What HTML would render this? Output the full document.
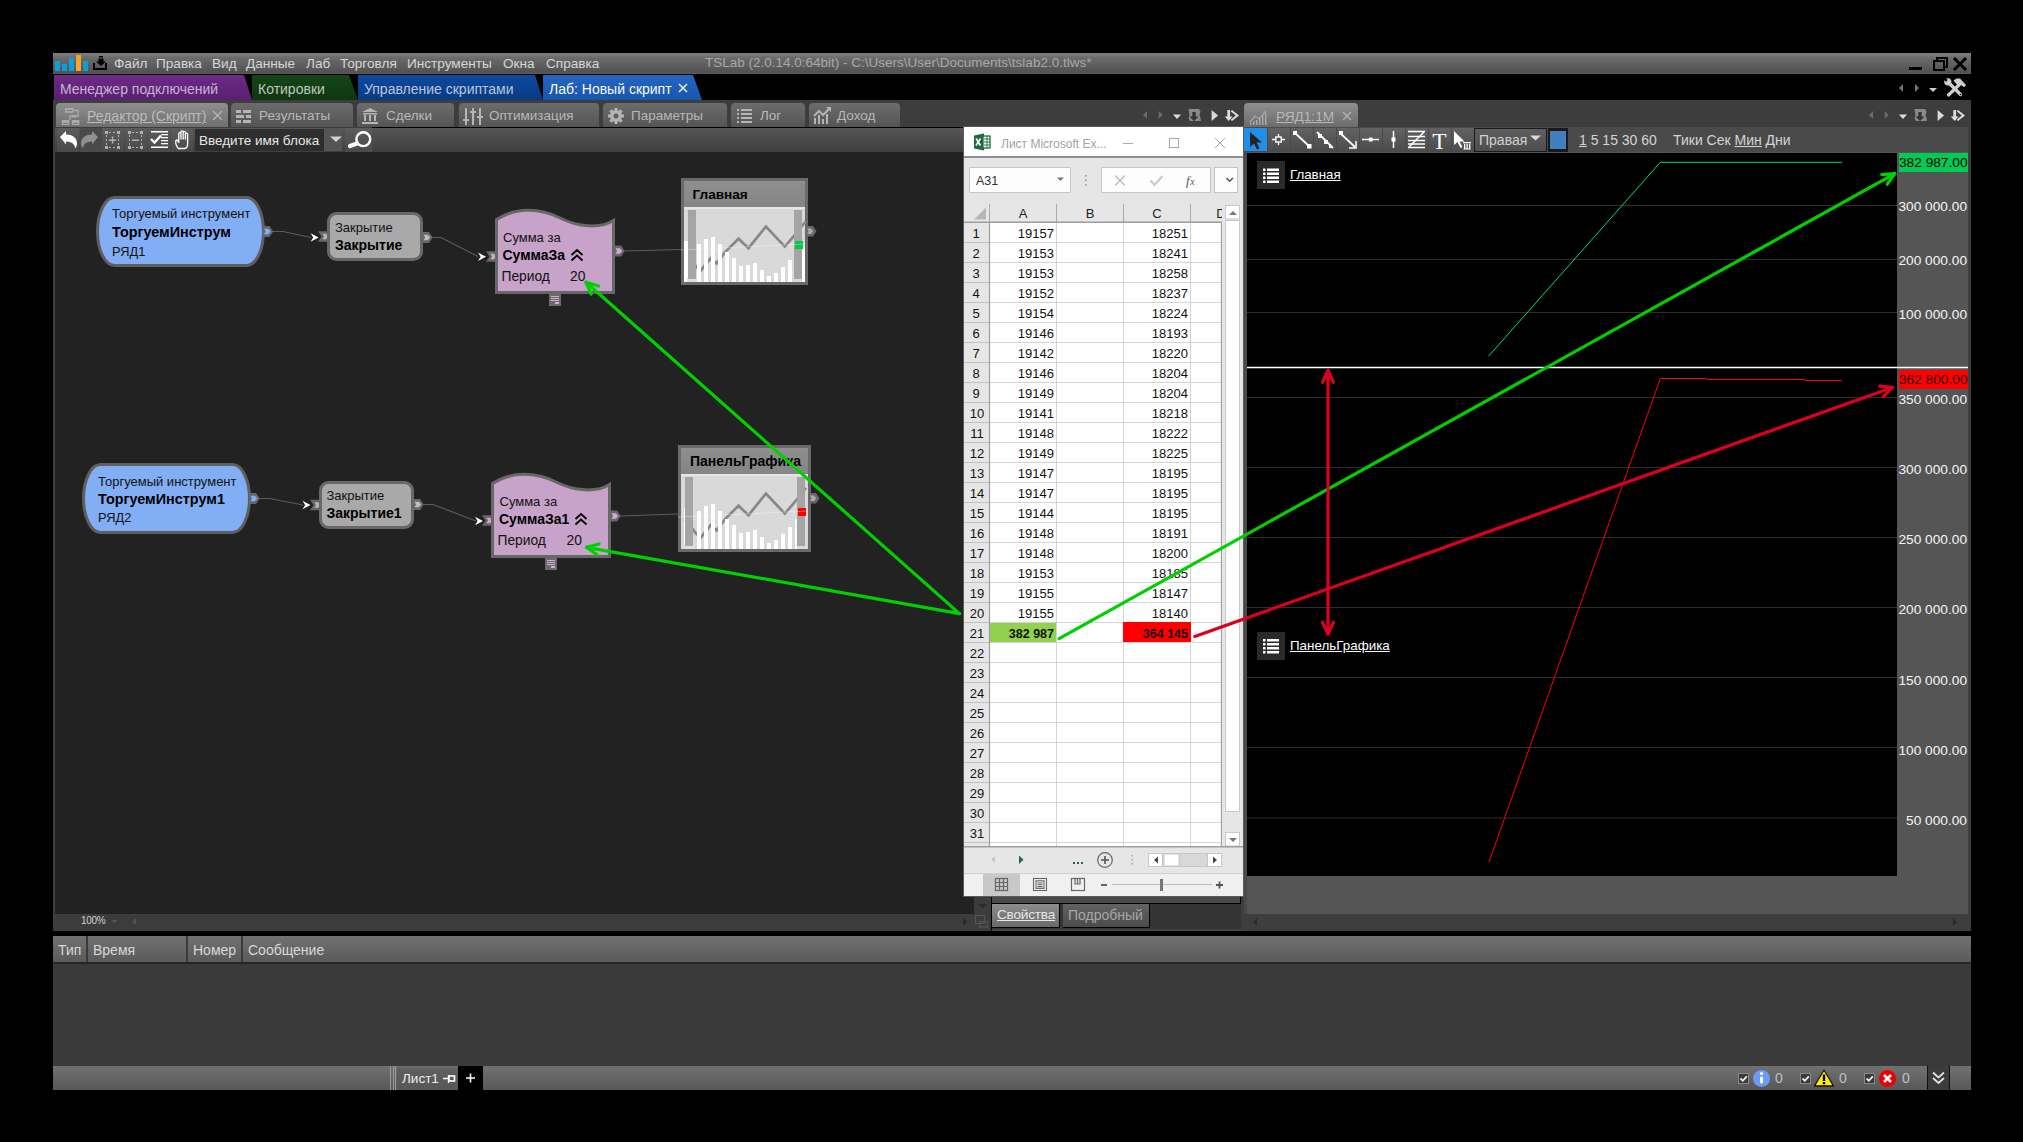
<!DOCTYPE html>
<html><head><meta charset="utf-8">
<style>
*{margin:0;padding:0;box-sizing:border-box}
html,body{width:2023px;height:1142px;overflow:hidden;background:#000;font-family:"Liberation Sans",sans-serif}
.a{position:absolute}
.t{position:absolute;white-space:pre;line-height:1}
#menubar{left:53px;top:53px;width:1918px;height:21px;background:linear-gradient(#7e7e7e,#6a6a6a 25%,#525252 92%,#5c5c5c)}
.menu{font-size:13.6px;color:#d6d6d6}
.doctab{top:75px;height:25px;font-size:14px;color:#cfcfcf}
#edpanel{left:53px;top:100px;width:1191px;height:831px;background:#3d3d3d}
#chpanel{left:1244px;top:100px;width:727px;height:831px;background:#3d3d3d}
.subtab{height:24px;top:103px;border-radius:4px 4px 0 0;background:linear-gradient(#6c6c6c,#545454);font-size:14px;color:#bdbdbd}
.subtab.act{background:linear-gradient(#8e8e8e,#6f6f6f)}
#canvas{left:55px;top:152px;width:919px;height:762px;background:#222}
.st{font-size:14px;color:#b8b8b8}
.tb{position:absolute;top:128px;height:24px;width:22px;background:linear-gradient(#5c5c5c,#4a4a4a)}
#hscroll{left:55px;top:914px;width:919px;height:15px;background:#3c3c3c}
#vscroll{left:974px;top:152px;width:16px;height:777px;background:#3c3c3c}

</style></head>
<body>
<div class="a" id="menubar"></div>
<div class="a" style="left:55px;top:61px;width:5px;height:10px;background:#0ba0dc"></div>
<div class="a" style="left:62px;top:64px;width:5px;height:7px;background:#0ba0dc"></div>
<div class="a" style="left:69px;top:58px;width:5px;height:13px;background:#0ba0dc"></div>
<div class="a" style="left:76px;top:55px;width:5px;height:16px;background:#f5a623"></div>
<div class="a" style="left:83px;top:61px;width:5px;height:10px;background:#0ba0dc"></div>
<svg class="a" style="left:92px;top:55px" width="16" height="16" viewBox="0 0 16 16"><rect x="7" y="1" width="4" height="1.5" fill="#000"/><path d="M6.5 3.5h5v3h2.5l-5 4.5-5-4.5h2.5z" fill="#000"/><path d="M1 8v7h14V8h-2v5H3V8z" fill="#000"/></svg>
<div class="t menu" style="left:114px;top:57px">Файл</div>
<div class="t menu" style="left:156px;top:57px">Правка</div>
<div class="t menu" style="left:212px;top:57px">Вид</div>
<div class="t menu" style="left:246px;top:57px">Данные</div>
<div class="t menu" style="left:306px;top:57px">Лаб</div>
<div class="t menu" style="left:340px;top:57px">Торговля</div>
<div class="t menu" style="left:407px;top:57px">Инструменты</div>
<div class="t menu" style="left:503px;top:57px">Окна</div>
<div class="t menu" style="left:546px;top:57px">Справка</div>
<div class="t" style="left:705px;top:56px;font-size:13.5px;color:#a8a8a8">TSLab (2.0.14.0:64bit) - C:\Users\User\Documents\tslab2.0.tlws*</div>
<svg class="a" style="left:1905px;top:55px" width="66" height="18" viewBox="0 0 66 18">
<rect x="4" y="12" width="13" height="3" fill="#000"/>
<rect x="29" y="6" width="10" height="9" fill="none" stroke="#000" stroke-width="2"/><path d="M32 5V3h10v9h-2" fill="none" stroke="#000" stroke-width="2"/>
<path d="M49 3l12 12M61 3L49 15" stroke="#000" stroke-width="3"/></svg>
<!-- doc tabs -->
<svg class="a" style="left:54px;top:75px" width="660" height="25" viewBox="0 0 660 25">
<defs>
<linearGradient id="gp" x1="0" y1="0" x2="0" y2="1"><stop offset="0" stop-color="#6e2a86"/><stop offset="1" stop-color="#5a1f72"/></linearGradient>
<linearGradient id="gg" x1="0" y1="0" x2="0" y2="1"><stop offset="0" stop-color="#15461a"/><stop offset="1" stop-color="#0f360f"/></linearGradient>
<linearGradient id="gb" x1="0" y1="0" x2="0" y2="1"><stop offset="0" stop-color="#0e4aa0"/><stop offset="1" stop-color="#093a82"/></linearGradient>
<linearGradient id="ga" x1="0" y1="0" x2="0" y2="1"><stop offset="0" stop-color="#2466c0"/><stop offset="1" stop-color="#1856ae"/></linearGradient>
</defs>
<path d="M0 0H190L198 25H0z" fill="url(#gp)"/>
<path d="M198 0H295L304 25H198z" fill="url(#gg)"/>
<path d="M304 0H481L489 25H304z" fill="url(#gb)"/>
<path d="M489 0H639L648 25H489z" fill="url(#ga)"/>
</svg>
<div class="t doctab" style="left:60px;top:81.7px;color:#c4b6cf">Менеджер подключений</div>
<div class="t doctab" style="left:258px;top:81.7px;color:#bfc8ba">Котировки</div>
<div class="t doctab" style="left:364px;top:81.7px;color:#bcc6da">Управление скриптами</div>
<div class="t doctab" style="left:549px;top:81.7px;color:#fafafa">Лаб: Новый скрипт</div>
<svg class="a" style="left:677px;top:82px" width="12" height="12" viewBox="0 0 12 12"><path d="M2 2l8 8M10 2L2 10" stroke="#e8e8e8" stroke-width="1.6"/></svg>
<!-- right nav of doc tabs -->
<svg class="a" style="left:1895px;top:76px" width="76" height="24" viewBox="1895 76 76 24">
<path d="M1903 84v8l-4-4z" fill="#777"/><path d="M1915 84v8l4-4z" fill="#777"/><path d="M1929 88h8l-4 4z" fill="#cfcfcf"/>
<g stroke="#cfcfcf" stroke-linecap="round" fill="none">
<path d="M1949 83l11.5 11.5" stroke-width="3.2"/>
<path d="M1959.5 84.5l-11 10.5" stroke-width="3.2"/>
</g>
<circle cx="1947.8" cy="81.8" r="3.6" fill="#cfcfcf"/>
<path d="M1946.8 80.8l-3-3" stroke="#000" stroke-width="2.4"/>
<path d="M1953.5 80.5l3-2h3.5l6 6.5-1.8 2.2-3.5-2.5-2.5 1.5z" fill="#cfcfcf"/>
<circle cx="1960.5" cy="94.5" r="0.8" fill="#000"/>
</svg>
<div class="a" id="edpanel"></div>
<div class="a" id="chpanel"></div>

<!-- sub tabs -->
<div class="a subtab act" style="left:56px;width:172px"></div>
<div class="a subtab" style="left:231px;width:122px"></div>
<div class="a subtab" style="left:357px;width:97px"></div>
<div class="a subtab" style="left:459px;width:140px"></div>
<div class="a subtab" style="left:603px;width:124px"></div>
<div class="a subtab" style="left:731px;width:74px"></div>
<div class="a subtab" style="left:809px;width:91px"></div>
<div class="t st" style="left:87px;top:109.3px;text-decoration:underline;color:#bcbcbc">Редактор (Скрипт)</div>
<div class="t st" style="left:259px;top:109.3px;font-size:13.5px">Результаты</div>
<div class="t st" style="left:386px;top:109.3px;font-size:13.5px">Сделки</div>
<div class="t st" style="left:489px;top:109.3px;font-size:13.5px">Оптимизация</div>
<div class="t st" style="left:631px;top:109.3px;font-size:13.5px">Параметры</div>
<div class="t st" style="left:760px;top:109.3px;font-size:13.5px">Лог</div>
<div class="t st" style="left:837px;top:109.3px;font-size:13.5px">Доход</div>
<svg class="a" style="left:0;top:0" width="1243" height="152" viewBox="0 0 1243 152">
<g fill="#a9a9a9">
<!-- editor icon -->
<rect x="65" y="108" width="8.5" height="4.8" fill="#aaa"/><rect x="66.5" y="110" width="5.5" height="1" fill="#777"/>
<path d="M73.5 110.5H78.2V116.2H69.8V120" fill="none" stroke="#aaa" stroke-width="1.3"/>
<rect x="71.5" y="115" width="5" height="2.6" fill="#aaa"/>
<rect x="61.8" y="120" width="7.5" height="5" fill="#aaa"/><rect x="63" y="123" width="5" height="1" fill="#777"/>
<rect x="71.8" y="120" width="7.5" height="5" fill="#aaa"/><rect x="73" y="123" width="5" height="1" fill="#777"/>
<!-- close x -->
</g>
<path d="M213 111l9 9M222 111l-9 9" stroke="#b0b0b0" stroke-width="1.5"/>
<!-- results icon -->
<g fill="#b5b5b5"><rect x="236" y="110" width="5" height="3"/><rect x="243" y="110" width="8" height="3"/><rect x="236" y="115" width="8" height="3"/><rect x="246" y="115" width="5" height="3"/><rect x="236" y="120" width="5" height="3"/><rect x="243" y="120" width="8" height="3"/></g>
<!-- deals icon -->
<g fill="#b5b5b5"><path d="M362 112l8-4 8 4z"/><rect x="363" y="113" width="14" height="1.5"/><rect x="364" y="115" width="2" height="6"/><rect x="369" y="115" width="2" height="6"/><rect x="374" y="115" width="2" height="6"/><rect x="362" y="122" width="16" height="2"/></g>
<!-- optimization icon -->
<g fill="#b5b5b5"><rect x="465" y="108" width="2" height="17"/><rect x="472" y="108" width="2" height="17"/><rect x="479" y="108" width="2" height="17"/><rect x="463" y="119" width="6" height="2"/><rect x="470" y="111" width="6" height="2"/><rect x="477" y="116" width="6" height="2"/></g>
<!-- gear -->
<g transform="translate(616,116)"><circle r="6" fill="#b5b5b5"/><circle r="2.5" fill="#5e5e5e"/>
<g fill="#b5b5b5"><rect x="-1.5" y="-8" width="3" height="16"/><rect x="-8" y="-1.5" width="16" height="3"/><rect x="-1.5" y="-8" width="3" height="16" transform="rotate(45)"/><rect x="-1.5" y="-8" width="3" height="16" transform="rotate(-45)"/></g><circle r="2.5" fill="#5e5e5e"/></g>
<!-- log icon -->
<g fill="#b5b5b5"><rect x="737" y="109" width="2" height="2"/><rect x="741" y="109" width="11" height="2"/><rect x="737" y="113" width="2" height="2"/><rect x="741" y="113" width="11" height="2"/><rect x="737" y="117" width="2" height="2"/><rect x="741" y="117" width="11" height="2"/><rect x="737" y="121" width="2" height="2"/><rect x="741" y="121" width="11" height="2"/></g>
<!-- income icon -->
<g fill="#b5b5b5"><rect x="814" y="118" width="2" height="6"/><rect x="818" y="115" width="2" height="9"/><rect x="822" y="119" width="2" height="5"/><rect x="826" y="114" width="2" height="10"/></g>
<path d="M814 116l5-5 4 4 7-7" stroke="#b5b5b5" stroke-width="2" fill="none"/><path d="M826 107h5v5z" fill="#b5b5b5"/>
</svg>
<!-- toolbar -->
<div class="a" style="left:372px;top:127px;width:872px;height:1px;background:#000"></div><div class="a" style="left:55px;top:128px;width:1189px;height:25px;background:linear-gradient(#565656,#3e3e3e)"></div>
<div class="tb" style="left:57px"></div>
<div class="tb" style="left:80px;background:#4a4a4a"></div>
<div class="tb" style="left:102px"></div>
<div class="tb" style="left:125px"></div>
<div class="tb" style="left:148px"></div>
<div class="tb" style="left:171px"></div>
<div class="a" style="left:195px;top:129px;width:129px;height:22px;background:#2e2e2e"></div>
<div class="a" style="left:324px;top:129px;width:18px;height:22px;background:#555"></div>
<div class="a" style="left:345px;top:128px;width:27px;height:24px;background:linear-gradient(#5c5c5c,#4a4a4a)"></div>
<div class="t" style="left:199px;top:133.5px;font-size:13.5px;color:#e8e8e8">Введите имя блока</div>
<svg class="a" style="left:0;top:0" width="380" height="152" viewBox="0 0 380 152">
<!-- undo -->
<path d="M60 137l6-6v3.5c6 0 11 3 11 9 0 2-1 4-2 5 0-4-3-7-9-7v3z" fill="#fff"/>
<!-- redo -->
<path d="M98 137l-6-6v3.5c-6 0-11 3-11 9 0 2 1 4 2 5 0-4 3-7 9-7v3z" fill="#8f8f8f"/>
<g fill="#b0b0b0"><rect x="105" y="131" width="3" height="3"/><rect x="117" y="131" width="3" height="3"/><rect x="105" y="146" width="3" height="3"/><rect x="117" y="146" width="3" height="3"/>
<rect x="109" y="132" width="2" height="1"/><rect x="113" y="132" width="2" height="1"/><rect x="109" y="147" width="2" height="1"/><rect x="113" y="147" width="2" height="1"/>
<rect x="106" y="135" width="1" height="2"/><rect x="106" y="139" width="1" height="2"/><rect x="106" y="143" width="1" height="2"/><rect x="118" y="135" width="1" height="2"/><rect x="118" y="139" width="1" height="2"/><rect x="118" y="143" width="1" height="2"/>
<rect x="109" y="139.5" width="7" height="1.5"/><rect x="111.8" y="136.5" width="1.5" height="7"/></g>
<g fill="#b0b0b0"><rect x="128" y="131" width="3" height="3"/><rect x="140" y="131" width="3" height="3"/><rect x="128" y="146" width="3" height="3"/><rect x="140" y="146" width="3" height="3"/>
<rect x="132" y="132" width="2" height="1"/><rect x="136" y="132" width="2" height="1"/><rect x="132" y="147" width="2" height="1"/><rect x="136" y="147" width="2" height="1"/>
<rect x="129" y="135" width="1" height="2"/><rect x="129" y="139" width="1" height="2"/><rect x="129" y="143" width="1" height="2"/><rect x="141" y="135" width="1" height="2"/><rect x="141" y="139" width="1" height="2"/><rect x="141" y="143" width="1" height="2"/>
<rect x="132" y="139.5" width="7" height="1.5"/></g>
<g fill="#fff"><rect x="151" y="131" width="17" height="1.5"/><rect x="151" y="146.5" width="17" height="1.5"/><rect x="161" y="134" width="7" height="1.3"/><rect x="161" y="137" width="7" height="1.3"/><rect x="161" y="140" width="7" height="1.3"/><rect x="161" y="143" width="7" height="1.3"/></g>
<path d="M151 139l3.5 3.5 6.5-7" stroke="#fff" stroke-width="2.4" fill="none"/>
<!-- hand -->
<path d="M178.5 148.5C176.5 146.5 175.5 143.5 175.8 140.5L177 139.8L178.8 142.5V133.5C178.8 132.3 181 132.3 181 133.5V139V131.8C181 130.6 183.2 130.6 183.2 131.8V139V132.3C183.2 131.1 185.4 131.1 185.4 132.3V139V134C185.4 132.8 187.6 132.8 187.6 134V143.5C187.6 146.5 186.5 148.5 184.5 148.5Z" fill="none" stroke="#fff" stroke-width="1.3" stroke-linejoin="round"/>
<path d="M330 136.5h12l-6 5.5z" fill="#d0d0d0"/>
<circle cx="363.3" cy="139.2" r="6.9" fill="none" stroke="#fff" stroke-width="2.4"/><path d="M357 143.5L350 146" stroke="#fff" stroke-width="4.2" stroke-linecap="round"/>
</svg>
<div class="a" id="canvas"></div>
<div class="a" id="hscroll"></div>
<div class="a" id="vscroll"></div>

<svg class="a" style="left:0;top:0" width="2023" height="1142" viewBox="0 0 2023 1142"><defs><linearGradient id="hdr" x1="0" y1="0" x2="0" y2="1"><stop offset="0" stop-color="#8e8e8e"/><stop offset="1" stop-color="#858585"/></linearGradient><clipPath id="cv"><rect x="55" y="152" width="919" height="762"/></clipPath></defs><g clip-path="url(#cv)" font-family="Liberation Sans">
<rect x="97.5" y="197.5" width="166" height="68" rx="17" ry="34" fill="#82aef5" stroke="#5f5f5f" stroke-width="3"/>
<text x="112" y="218" font-size="13" fill="#111">Торгуемый инструмент</text>
<text x="112" y="236.5" font-size="14.4" font-weight="bold" fill="#000">ТоргуемИнструм</text>
<text x="112" y="255.5" font-size="12.8" fill="#111">РЯД1</text>
<path d="M262.5 226.0h7l3.7 5.5-3.7 5.5h-7z" fill="#686868"/><path d="M264.0 228.7h4.3l2.5 2.8-2.5 2.8h-4.3l1.6-2.8z" fill="#7fb0ff"/>
<path d="M273 231.5H283L311 237.5" fill="none" stroke="#5c5c5c" stroke-width="1.2"/>
<path d="M318.6 237.5l-8-4.3 2.6 4.3-2.6 4.3z" fill="#fff"/>
<path d="M318 231.2h9.5v10.6h-9.5l3.5-5.3z" fill="#686868"/><path d="M322.5 233.7h3.5l2 2.8-2 2.8h-3.5l1.6-2.8z" fill="#b8b8b8"/>
<rect x="328.5" y="213.5" width="93" height="46" rx="8" fill="#a9a9a9" stroke="#686868" stroke-width="3"/>
<text x="335" y="232" font-size="13" fill="#111">Закрытие</text>
<text x="335" y="250" font-size="14" font-weight="bold" fill="#000">Закрытие</text>
<path d="M422 232.0h7l3.7 5.5-3.7 5.5h-7z" fill="#686868"/><path d="M423.5 234.7h4.3l2.5 2.8-2.5 2.8h-4.3l1.6-2.8z" fill="#bdbdbd"/>
<path d="M432 237.5H441L478 256.5" fill="none" stroke="#5c5c5c" stroke-width="1.2"/>
<path d="M486 256.8l-8-4.3 2.6 4.3-2.6 4.3z" fill="#fff"/>
<path d="M486 251.2h9.5v10.6h-9.5l3.5-5.3z" fill="#686868"/><path d="M490.5 253.7h3.5l2 2.8-2 2.8h-3.5l1.6-2.8z" fill="#d0a8d2"/>
<path d="M496.5 219.5C516 207 540 208 560 218C578 227 600 229 613.5 220.5V292.5H496.5Z" fill="#c7a2c9" stroke="#686868" stroke-width="3"/>
<text x="503" y="242" font-size="13" fill="#111">Сумма за</text>
<text x="502.5" y="260" font-size="14" font-weight="bold" fill="#000">СуммаЗа</text>
<path d="M571.5 255l5.5-5 5.5 5M571.5 260.5l5.5-5 5.5 5" fill="none" stroke="#000" stroke-width="1.8"/>
<text x="501.5" y="281" font-size="13.8" fill="#111">Период</text>
<text x="570" y="281" font-size="13.8" fill="#111">20</text>
<path d="M614 245.5h7l3.7 5.5-3.7 5.5h-7z" fill="#686868"/><path d="M615.5 248.2h4.3l2.5 2.8-2.5 2.8h-4.3l1.6-2.8z" fill="#d0a8d2"/>
<rect x="549" y="294" width="12" height="12" fill="#6a6a6a"/><g fill="#d0b0d0"><rect x="551" y="296" width="8" height="1"/><rect x="551" y="298" width="8" height="1"/><rect x="551" y="300" width="8" height="1"/><rect x="555" y="302" width="4" height="2"/></g>
<path d="M624 251L681 249.5" stroke="#5c5c5c" stroke-width="1.2"/>
<rect x="681" y="178" width="127" height="107" fill="#6a6a6a"/>
<rect x="684" y="181" width="121" height="26" fill="url(#hdr)"/>
<rect x="684" y="207" width="121" height="75" fill="#d9d9d9"/>
<rect x="684" y="207" width="121" height="2" fill="#e6e6e6"/>
<polyline points="684,252 688,256 696,266.5 700.7,270.7 710.7,258.1 716.5,263.4 725.4,251.8 738.5,238.7 748.5,248.2 765.9,226.6 784.8,246.6 794,236 806,221" fill="none" stroke="#878787" stroke-width="2.7" stroke-linejoin="miter"/>
<rect x="697" y="244" width="4" height="38" fill="#fff"/>
<rect x="704" y="239" width="4" height="43" fill="#fff"/>
<rect x="711" y="237" width="4" height="45" fill="#fff"/>
<rect x="718" y="244" width="4" height="38" fill="#fff"/>
<rect x="725" y="252" width="4" height="30" fill="#fff"/>
<rect x="732" y="258" width="4" height="24" fill="#fff"/>
<rect x="739" y="266" width="4" height="16" fill="#fff"/>
<rect x="746" y="265" width="4" height="17" fill="#fff"/>
<rect x="753" y="263" width="4" height="19" fill="#fff"/>
<rect x="760" y="270" width="4" height="12" fill="#fff"/>
<rect x="767" y="276" width="4" height="6" fill="#fff"/>
<rect x="774" y="273" width="4" height="9" fill="#fff"/>
<rect x="781" y="267" width="4" height="15" fill="#fff"/>
<rect x="788" y="260" width="4" height="22" fill="#fff"/>
<rect x="684" y="241" width="4" height="41" fill="#fff"/>
<rect x="802" y="246" width="3" height="36" fill="#fff"/>
<rect x="687" y="278" width="10" height="4" fill="#e0e0e0"/>
<rect x="688" y="210" width="8" height="69" fill="#a5a5a5"/>
<rect x="794" y="210" width="8" height="69" fill="#a5a5a5"/>
<rect x="795" y="241" width="8" height="8" fill="#00cc44"/>
<path d="M681 250 L805 244" stroke="#fff" stroke-opacity="0.35" stroke-width="1"/>
<text x="692.5" y="199" font-size="13.6" font-weight="bold" fill="#000">Главная</text>
<path d="M805 226h8l3.5 5.2-3.5 5.2h-8z" fill="#686868"/><path d="M807 228.5h4l2.2 2.7-2.2 2.7h-4l1.6-2.7z" fill="#aaa"/>
<rect x="83.5" y="464.5" width="166" height="68" rx="17" ry="34" fill="#82aef5" stroke="#5f5f5f" stroke-width="3"/>
<text x="98" y="485.5" font-size="13" fill="#111">Торгуемый инструмент</text>
<text x="98" y="503.5" font-size="14.4" font-weight="bold" fill="#000">ТоргуемИнструм1</text>
<text x="98" y="522" font-size="12.8" fill="#111">РЯД2</text>
<path d="M249 493.0h7l3.7 5.5-3.7 5.5h-7z" fill="#686868"/><path d="M250.5 495.7h4.3l2.5 2.8-2.5 2.8h-4.3l1.6-2.8z" fill="#7fb0ff"/>
<path d="M259.5 498.5H269.5L303 505" fill="none" stroke="#5c5c5c" stroke-width="1.2"/>
<path d="M310.5 505l-8-4.3 2.6 4.3-2.6 4.3z" fill="#fff"/>
<path d="M310 499.7h9.5v10.6h-9.5l3.5-5.3z" fill="#686868"/><path d="M314.5 502.2h3.5l2 2.8-2 2.8h-3.5l1.6-2.8z" fill="#b8b8b8"/>
<rect x="320.5" y="482.5" width="92" height="45" rx="8" fill="#a9a9a9" stroke="#686868" stroke-width="3"/>
<text x="326.5" y="500" font-size="13" fill="#111">Закрытие</text>
<text x="326.5" y="518" font-size="14" font-weight="bold" fill="#000">Закрытие1</text>
<path d="M413 499.0h7l3.7 5.5-3.7 5.5h-7z" fill="#686868"/><path d="M414.5 501.7h4.3l2.5 2.8-2.5 2.8h-4.3l1.6-2.8z" fill="#bdbdbd"/>
<path d="M423 504.5H433L476 521" fill="none" stroke="#5c5c5c" stroke-width="1.2"/>
<path d="M483 521l-8-4.3 2.6 4.3-2.6 4.3z" fill="#fff"/>
<path d="M482 515.2h9.5v10.6h-9.5l3.5-5.3z" fill="#686868"/><path d="M486.5 517.7h3.5l2 2.8-2 2.8h-3.5l1.6-2.8z" fill="#d0a8d2"/>
<path d="M492.5 483.5C512 471 536 472 556 482C574 491 596 493 609.5 484.5V556.5H492.5Z" fill="#c7a2c9" stroke="#686868" stroke-width="3"/>
<text x="499.5" y="506" font-size="13" fill="#111">Сумма за</text>
<text x="499" y="524" font-size="14" font-weight="bold" fill="#000">СуммаЗа1</text>
<path d="M575.5 519l5.5-5 5.5 5M575.5 524.5l5.5-5 5.5 5" fill="none" stroke="#000" stroke-width="1.8"/>
<text x="497.5" y="545" font-size="13.8" fill="#111">Период</text>
<text x="566.5" y="545" font-size="13.8" fill="#111">20</text>
<path d="M610 510.5h7l3.7 5.5-3.7 5.5h-7z" fill="#686868"/><path d="M611.5 513.2h4.3l2.5 2.8-2.5 2.8h-4.3l1.6-2.8z" fill="#d0a8d2"/>
<rect x="545" y="558" width="12" height="12" fill="#6a6a6a"/><g fill="#d0b0d0"><rect x="547" y="560" width="8" height="1"/><rect x="547" y="562" width="8" height="1"/><rect x="547" y="564" width="8" height="1"/><rect x="551" y="566" width="4" height="2"/></g>
<path d="M620 516L678 514" stroke="#5c5c5c" stroke-width="1.2"/>
<rect x="678" y="445" width="133" height="107" fill="#6a6a6a"/>
<rect x="681" y="448" width="127" height="26" fill="url(#hdr)"/>
<rect x="681" y="474" width="127" height="75" fill="#d9d9d9"/>
<rect x="681" y="474" width="127" height="2" fill="#e6e6e6"/>
<polyline points="684,519 688,523 696,533.5 700.7,537.7 710.7,525.1 716.5,530.4 725.4,518.8 738.5,505.7 748.5,515.2 765.9,493.6 784.8,513.6 794,503 806,488" fill="none" stroke="#878787" stroke-width="2.7" stroke-linejoin="miter"/>
<rect x="697" y="511" width="4" height="38" fill="#fff"/>
<rect x="704" y="506" width="4" height="43" fill="#fff"/>
<rect x="711" y="504" width="4" height="45" fill="#fff"/>
<rect x="718" y="511" width="4" height="38" fill="#fff"/>
<rect x="725" y="519" width="4" height="30" fill="#fff"/>
<rect x="732" y="525" width="4" height="24" fill="#fff"/>
<rect x="739" y="533" width="4" height="16" fill="#fff"/>
<rect x="746" y="532" width="4" height="17" fill="#fff"/>
<rect x="753" y="530" width="4" height="19" fill="#fff"/>
<rect x="760" y="537" width="4" height="12" fill="#fff"/>
<rect x="767" y="543" width="4" height="6" fill="#fff"/>
<rect x="774" y="540" width="4" height="9" fill="#fff"/>
<rect x="781" y="534" width="4" height="15" fill="#fff"/>
<rect x="788" y="527" width="4" height="22" fill="#fff"/>
<rect x="684" y="508" width="2" height="41" fill="#fff"/>
<rect x="795" y="519" width="2" height="30" fill="#fff"/>
<rect x="684" y="545" width="10" height="4" fill="#e0e0e0"/>
<rect x="685" y="477" width="8" height="69" fill="#a5a5a5"/>
<rect x="797" y="477" width="8" height="69" fill="#a5a5a5"/>
<rect x="798" y="508" width="8" height="8" fill="#ff0000"/>
<path d="M678 517 L808 511" stroke="#fff" stroke-opacity="0.35" stroke-width="1"/>
<text x="690" y="466" font-size="14" font-weight="bold" fill="#000">ПанельГрафика</text>
<path d="M808 493h8l3.5 5.2-3.5 5.2h-8z" fill="#686868"/><path d="M810 495.5h4l2.2 2.7-2.2 2.7h-4l1.6-2.7z" fill="#aaa"/>
</g></svg>
<div class="a" style="left:963px;top:126px;width:281px;height:771px;background:#5a5a5a"></div>
<div class="a" style="left:964px;top:127px;width:279px;height:769px;background:#e6e6e6"></div>
<div class="a" style="left:964px;top:127px;width:279px;height:29px;background:#fff"></div>
<div class="a" style="left:964px;top:156px;width:279px;height:1.5px;background:#8f8f8f"></div>
<div class="t" style="left:1001px;top:137.5px;font-size:12px;color:#a2a2a2">Лист Microsoft Ex...</div>
<div class="a" style="left:969px;top:167px;width:102px;height:26px;background:#fdfdfd;border:1px solid #c6c6c6"></div>
<div class="t" style="left:976px;top:175px;font-size:12.5px;color:#333">A31</div>
<div class="a" style="left:1101px;top:167px;width:110px;height:26px;background:#fdfdfd;border:1px solid #c6c6c6"></div>
<div class="a" style="left:1214px;top:167px;width:24px;height:26px;background:#fdfdfd;border:1px solid #c6c6c6"></div>
<div class="a" style="left:990px;top:222px;width:232px;height:624px;background:#fff"></div>
<svg class="a" style="left:0;top:0" width="2023" height="1142" viewBox="0 0 2023 1142">
<path d="M974 135.5l10-2v17l-10-2z" fill="#1d6b3c"/><rect x="983" y="136" width="7" height="12" fill="#fff" stroke="#1d6b3c" stroke-width="1.3"/><path d="M984 139h6M984 142h6M984 145h6M987 136v12" stroke="#1d6b3c" stroke-width="0.9"/><path d="M976 138.5l4.5 7M980.5 138.5l-4.5 7" stroke="#fff" stroke-width="1.6"/>
<path d="M1123 143.5h10" stroke="#a8a8a8" stroke-width="1"/><rect x="1169.5" y="138.5" width="9" height="9" fill="none" stroke="#a8a8a8" stroke-width="1"/><path d="M1215 138l10 10M1225 138l-10 10" stroke="#a8a8a8" stroke-width="1"/>
<path d="M1057 177.5h7l-3.5 3.5z" fill="#777"/>
<g fill="#9a9a9a"><rect x="1085" y="175" width="1.6" height="1.6"/><rect x="1085" y="179.5" width="1.6" height="1.6"/><rect x="1085" y="184" width="1.6" height="1.6"/></g>
<path d="M1115 175.5l10 10M1125 175.5l-10 10" stroke="#bdbdbd" stroke-width="1.3"/><path d="M1150.5 180.5l4 4.5 8-9" fill="none" stroke="#c8c8c8" stroke-width="2"/>
<text x="1186" y="185" font-family="Liberation Serif" font-style="italic" font-size="13" fill="#555">f<tspan font-size="10" dx="0.5">x</tspan></text>
<path d="M1226.5 178l3.2 3.2 3.2-3.2" fill="none" stroke="#555" stroke-width="1.6"/>
<rect x="964" y="203" width="258" height="19" fill="#e6e6e6"/>
<path d="M974 219.5l12-12v12z" fill="#b7b7b7"/>
<path d="M989.5 204v18" stroke="#ababab" stroke-width="1"/>
<path d="M1056.5 204v18" stroke="#ababab" stroke-width="1"/>
<path d="M1123.5 204v18" stroke="#ababab" stroke-width="1"/>
<path d="M1190.5 204v18" stroke="#ababab" stroke-width="1"/>
<rect x="964" y="221.5" width="258" height="1.5" fill="#9e9e9e"/>
<text x="1023" y="218" font-size="13" fill="#222" text-anchor="middle">A</text>
<text x="1090" y="218" font-size="13" fill="#222" text-anchor="middle">B</text>
<text x="1157" y="218" font-size="13" fill="#222" text-anchor="middle">C</text>
<text x="1221" y="218" font-size="13" fill="#222" text-anchor="middle">D</text>
<rect x="964" y="223" width="25" height="623" fill="#e6e6e6"/>
<path d="M989 242.5H1222" stroke="#d4d4d4" stroke-width="1"/>
<path d="M964 242.5H989" stroke="#c2c2c2" stroke-width="1"/>
<path d="M989 262.5H1222" stroke="#d4d4d4" stroke-width="1"/>
<path d="M964 262.5H989" stroke="#c2c2c2" stroke-width="1"/>
<path d="M989 282.5H1222" stroke="#d4d4d4" stroke-width="1"/>
<path d="M964 282.5H989" stroke="#c2c2c2" stroke-width="1"/>
<path d="M989 302.5H1222" stroke="#d4d4d4" stroke-width="1"/>
<path d="M964 302.5H989" stroke="#c2c2c2" stroke-width="1"/>
<path d="M989 322.5H1222" stroke="#d4d4d4" stroke-width="1"/>
<path d="M964 322.5H989" stroke="#c2c2c2" stroke-width="1"/>
<path d="M989 342.5H1222" stroke="#d4d4d4" stroke-width="1"/>
<path d="M964 342.5H989" stroke="#c2c2c2" stroke-width="1"/>
<path d="M989 362.5H1222" stroke="#d4d4d4" stroke-width="1"/>
<path d="M964 362.5H989" stroke="#c2c2c2" stroke-width="1"/>
<path d="M989 382.5H1222" stroke="#d4d4d4" stroke-width="1"/>
<path d="M964 382.5H989" stroke="#c2c2c2" stroke-width="1"/>
<path d="M989 402.5H1222" stroke="#d4d4d4" stroke-width="1"/>
<path d="M964 402.5H989" stroke="#c2c2c2" stroke-width="1"/>
<path d="M989 422.5H1222" stroke="#d4d4d4" stroke-width="1"/>
<path d="M964 422.5H989" stroke="#c2c2c2" stroke-width="1"/>
<path d="M989 442.5H1222" stroke="#d4d4d4" stroke-width="1"/>
<path d="M964 442.5H989" stroke="#c2c2c2" stroke-width="1"/>
<path d="M989 462.5H1222" stroke="#d4d4d4" stroke-width="1"/>
<path d="M964 462.5H989" stroke="#c2c2c2" stroke-width="1"/>
<path d="M989 482.5H1222" stroke="#d4d4d4" stroke-width="1"/>
<path d="M964 482.5H989" stroke="#c2c2c2" stroke-width="1"/>
<path d="M989 502.5H1222" stroke="#d4d4d4" stroke-width="1"/>
<path d="M964 502.5H989" stroke="#c2c2c2" stroke-width="1"/>
<path d="M989 522.5H1222" stroke="#d4d4d4" stroke-width="1"/>
<path d="M964 522.5H989" stroke="#c2c2c2" stroke-width="1"/>
<path d="M989 542.5H1222" stroke="#d4d4d4" stroke-width="1"/>
<path d="M964 542.5H989" stroke="#c2c2c2" stroke-width="1"/>
<path d="M989 562.5H1222" stroke="#d4d4d4" stroke-width="1"/>
<path d="M964 562.5H989" stroke="#c2c2c2" stroke-width="1"/>
<path d="M989 582.5H1222" stroke="#d4d4d4" stroke-width="1"/>
<path d="M964 582.5H989" stroke="#c2c2c2" stroke-width="1"/>
<path d="M989 602.5H1222" stroke="#d4d4d4" stroke-width="1"/>
<path d="M964 602.5H989" stroke="#c2c2c2" stroke-width="1"/>
<path d="M989 622.5H1222" stroke="#d4d4d4" stroke-width="1"/>
<path d="M964 622.5H989" stroke="#c2c2c2" stroke-width="1"/>
<path d="M989 642.5H1222" stroke="#d4d4d4" stroke-width="1"/>
<path d="M964 642.5H989" stroke="#c2c2c2" stroke-width="1"/>
<path d="M989 662.5H1222" stroke="#d4d4d4" stroke-width="1"/>
<path d="M964 662.5H989" stroke="#c2c2c2" stroke-width="1"/>
<path d="M989 682.5H1222" stroke="#d4d4d4" stroke-width="1"/>
<path d="M964 682.5H989" stroke="#c2c2c2" stroke-width="1"/>
<path d="M989 702.5H1222" stroke="#d4d4d4" stroke-width="1"/>
<path d="M964 702.5H989" stroke="#c2c2c2" stroke-width="1"/>
<path d="M989 722.5H1222" stroke="#d4d4d4" stroke-width="1"/>
<path d="M964 722.5H989" stroke="#c2c2c2" stroke-width="1"/>
<path d="M989 742.5H1222" stroke="#d4d4d4" stroke-width="1"/>
<path d="M964 742.5H989" stroke="#c2c2c2" stroke-width="1"/>
<path d="M989 762.5H1222" stroke="#d4d4d4" stroke-width="1"/>
<path d="M964 762.5H989" stroke="#c2c2c2" stroke-width="1"/>
<path d="M989 782.5H1222" stroke="#d4d4d4" stroke-width="1"/>
<path d="M964 782.5H989" stroke="#c2c2c2" stroke-width="1"/>
<path d="M989 802.5H1222" stroke="#d4d4d4" stroke-width="1"/>
<path d="M964 802.5H989" stroke="#c2c2c2" stroke-width="1"/>
<path d="M989 822.5H1222" stroke="#d4d4d4" stroke-width="1"/>
<path d="M964 822.5H989" stroke="#c2c2c2" stroke-width="1"/>
<path d="M989 842.5H1222" stroke="#d4d4d4" stroke-width="1"/>
<path d="M964 842.5H989" stroke="#c2c2c2" stroke-width="1"/>
<path d="M1056.5 223V846" stroke="#d4d4d4" stroke-width="1"/>
<path d="M1123.5 223V846" stroke="#d4d4d4" stroke-width="1"/>
<path d="M1190.5 223V846" stroke="#d4d4d4" stroke-width="1"/>
<path d="M989.5 223V846" stroke="#9e9e9e" stroke-width="1.2"/>
<path d="M1221.5 223V846" stroke="#a0a0a0" stroke-width="1.2"/>
<rect x="990" y="623" width="66" height="19" fill="#92d050"/>
<rect x="1123" y="622" width="68" height="20" fill="#ff0000"/>
<g font-size="13" fill="#111" font-family="Liberation Sans">
<text x="976" y="238" text-anchor="middle">1</text>
<text x="976" y="258" text-anchor="middle">2</text>
<text x="976" y="278" text-anchor="middle">3</text>
<text x="976" y="298" text-anchor="middle">4</text>
<text x="976" y="318" text-anchor="middle">5</text>
<text x="976" y="338" text-anchor="middle">6</text>
<text x="976" y="358" text-anchor="middle">7</text>
<text x="976" y="378" text-anchor="middle">8</text>
<text x="976" y="398" text-anchor="middle">9</text>
<text x="977" y="418" text-anchor="middle">10</text>
<text x="977" y="438" text-anchor="middle">11</text>
<text x="977" y="458" text-anchor="middle">12</text>
<text x="977" y="478" text-anchor="middle">13</text>
<text x="977" y="498" text-anchor="middle">14</text>
<text x="977" y="518" text-anchor="middle">15</text>
<text x="977" y="538" text-anchor="middle">16</text>
<text x="977" y="558" text-anchor="middle">17</text>
<text x="977" y="578" text-anchor="middle">18</text>
<text x="977" y="598" text-anchor="middle">19</text>
<text x="977" y="618" text-anchor="middle">20</text>
<text x="977" y="638" text-anchor="middle">21</text>
<text x="977" y="658" text-anchor="middle">22</text>
<text x="977" y="678" text-anchor="middle">23</text>
<text x="977" y="698" text-anchor="middle">24</text>
<text x="977" y="718" text-anchor="middle">25</text>
<text x="977" y="738" text-anchor="middle">26</text>
<text x="977" y="758" text-anchor="middle">27</text>
<text x="977" y="778" text-anchor="middle">28</text>
<text x="977" y="798" text-anchor="middle">29</text>
<text x="977" y="818" text-anchor="middle">30</text>
<text x="977" y="838" text-anchor="middle">31</text>
<text x="1054" y="238" text-anchor="end">19157</text>
<text x="1188" y="238" text-anchor="end">18251</text>
<text x="1054" y="258" text-anchor="end">19153</text>
<text x="1188" y="258" text-anchor="end">18241</text>
<text x="1054" y="278" text-anchor="end">19153</text>
<text x="1188" y="278" text-anchor="end">18258</text>
<text x="1054" y="298" text-anchor="end">19152</text>
<text x="1188" y="298" text-anchor="end">18237</text>
<text x="1054" y="318" text-anchor="end">19154</text>
<text x="1188" y="318" text-anchor="end">18224</text>
<text x="1054" y="338" text-anchor="end">19146</text>
<text x="1188" y="338" text-anchor="end">18193</text>
<text x="1054" y="358" text-anchor="end">19142</text>
<text x="1188" y="358" text-anchor="end">18220</text>
<text x="1054" y="378" text-anchor="end">19146</text>
<text x="1188" y="378" text-anchor="end">18204</text>
<text x="1054" y="398" text-anchor="end">19149</text>
<text x="1188" y="398" text-anchor="end">18204</text>
<text x="1054" y="418" text-anchor="end">19141</text>
<text x="1188" y="418" text-anchor="end">18218</text>
<text x="1054" y="438" text-anchor="end">19148</text>
<text x="1188" y="438" text-anchor="end">18222</text>
<text x="1054" y="458" text-anchor="end">19149</text>
<text x="1188" y="458" text-anchor="end">18225</text>
<text x="1054" y="478" text-anchor="end">19147</text>
<text x="1188" y="478" text-anchor="end">18195</text>
<text x="1054" y="498" text-anchor="end">19147</text>
<text x="1188" y="498" text-anchor="end">18195</text>
<text x="1054" y="518" text-anchor="end">19144</text>
<text x="1188" y="518" text-anchor="end">18195</text>
<text x="1054" y="538" text-anchor="end">19148</text>
<text x="1188" y="538" text-anchor="end">18191</text>
<text x="1054" y="558" text-anchor="end">19148</text>
<text x="1188" y="558" text-anchor="end">18200</text>
<text x="1054" y="578" text-anchor="end">19153</text>
<text x="1188" y="578" text-anchor="end">18185</text>
<text x="1054" y="598" text-anchor="end">19155</text>
<text x="1188" y="598" text-anchor="end">18147</text>
<text x="1054" y="618" text-anchor="end">19155</text>
<text x="1188" y="618" text-anchor="end">18140</text>
<text x="1054" y="638" text-anchor="end" font-weight="bold" font-size="12.5">382 987</text>
<text x="1188" y="638" text-anchor="end" font-weight="bold" font-size="12.5">364 145</text>
</g>
<rect x="1222" y="203" width="21" height="643" fill="#e6e6e6"/>
<rect x="1225.5" y="205.5" width="14" height="13.5" fill="#fff" stroke="#c8c8c8"/><path d="M1229 215h8l-4-4z" fill="#777"/>
<rect x="1225.5" y="220.5" width="14" height="591" fill="#fff" stroke="#c8c8c8"/>
<rect x="1225.5" y="832.5" width="14" height="13.5" fill="#fff" stroke="#c8c8c8"/><path d="M1229 838h8l-4 4z" fill="#777"/>
<rect x="964" y="846" width="279" height="1.5" fill="#9e9e9e"/>
<path d="M995 856v7l-3.5-3.5z" fill="#c5c5c5"/><path d="M1019 855.5v8.5l4.5-4.25z" fill="#1d6b3c"/>
<g fill="#1d6b3c"><rect x="1073" y="862" width="2" height="2"/><rect x="1077" y="862" width="2" height="2"/><rect x="1081" y="862" width="2" height="2"/></g>
<circle cx="1105" cy="860" r="7.3" fill="none" stroke="#666" stroke-width="1.2"/><path d="M1101 860h8M1105 856v8" stroke="#555" stroke-width="1.6"/>
<g fill="#aaa"><rect x="1131.5" y="855" width="1.5" height="1.5"/><rect x="1131.5" y="859" width="1.5" height="1.5"/><rect x="1131.5" y="863" width="1.5" height="1.5"/></g>
<rect x="1148.5" y="853.5" width="73" height="13" fill="#d8d8d8" stroke="#c8c8c8"/>
<rect x="1148.5" y="853.5" width="14" height="13" fill="#fff" stroke="#c8c8c8"/><path d="M1158 856.5v7l-4-3.5z" fill="#444"/>
<rect x="1164" y="854" width="15" height="12" fill="#fff" stroke="#c8c8c8"/>
<rect x="1207.5" y="853.5" width="14" height="13" fill="#fff" stroke="#c8c8c8"/><path d="M1213 856.5v7l4-3.5z" fill="#444"/>
<rect x="964" y="874" width="279" height="22" fill="#f0f0f0"/>
<rect x="964" y="873" width="279" height="1" fill="#d0d0d0"/>
<rect x="983" y="874" width="37" height="22" fill="#c8c8c8"/>
<g fill="none" stroke="#666" stroke-width="1.2"><rect x="995.5" y="878.5" width="12" height="12"/><path d="M999.5 879v11M1003.5 879v11M996 882.5h11M996 886.5h11"/></g>
<g fill="none" stroke="#666" stroke-width="1.1"><rect x="1033.5" y="878.5" width="13" height="12"/><rect x="1036" y="880.8" width="8" height="7.6"/><path d="M1037.5 883h5M1037.5 884.8h5M1037.5 886.6h5"/></g>
<g fill="none" stroke="#666" stroke-width="1.2"><rect x="1071.5" y="878.5" width="13" height="12"/><path d="M1075 879v5h5v-5M1077.5 879v5"/></g>
<path d="M1101 885h6" stroke="#555" stroke-width="1.8"/><path d="M1112 884.5h100" stroke="#bbb" stroke-width="1"/><rect x="1160" y="879" width="3" height="12" fill="#777"/><path d="M1216 885h7M1219.5 881.5v7" stroke="#555" stroke-width="1.8"/>
</svg>
<div class="a" style="left:1244px;top:103px;width:114px;height:24px;border-radius:4px 4px 0 0;background:linear-gradient(#8e8e8e,#6c6c6c)"></div>
<div class="t" style="left:1276px;top:109.5px;font-size:13.6px;color:#b9b9b9;text-decoration:underline">РЯД1:1М</div>
<div class="a" style="left:1244px;top:127px;width:724px;height:25px;background:#4a4a4a"></div>
<div class="a" style="left:1244px;top:128px;width:23px;height:23px;background:#1e90e8"></div>
<div class="a" style="left:1268px;top:128px;width:22px;height:23px;background:linear-gradient(#626262,#4c4c4c)"></div>
<div class="a" style="left:1291px;top:128px;width:22px;height:23px;background:linear-gradient(#626262,#4c4c4c)"></div>
<div class="a" style="left:1314px;top:128px;width:22px;height:23px;background:linear-gradient(#626262,#4c4c4c)"></div>
<div class="a" style="left:1337px;top:128px;width:22px;height:23px;background:linear-gradient(#626262,#4c4c4c)"></div>
<div class="a" style="left:1360px;top:128px;width:22px;height:23px;background:linear-gradient(#626262,#4c4c4c)"></div>
<div class="a" style="left:1383px;top:128px;width:22px;height:23px;background:linear-gradient(#626262,#4c4c4c)"></div>
<div class="a" style="left:1406px;top:128px;width:22px;height:23px;background:linear-gradient(#626262,#4c4c4c)"></div>
<div class="a" style="left:1429px;top:128px;width:22px;height:23px;background:linear-gradient(#626262,#4c4c4c)"></div>
<div class="a" style="left:1452px;top:128px;width:22px;height:23px;background:linear-gradient(#626262,#4c4c4c)"></div>
<div class="a" style="left:1474px;top:128px;width:73px;height:24px;background:#1a1a1a"></div>
<div class="a" style="left:1475px;top:129px;width:71px;height:22px;background:linear-gradient(#5e5e5e,#4e4e4e)"></div>
<div class="t" style="left:1479px;top:133px;font-size:14px;color:#d0d0d0">Правая</div>
<div class="a" style="left:1548px;top:128px;width:20px;height:24px;background:#1a1a1a"></div>
<div class="a" style="left:1550px;top:131px;width:16px;height:18px;background:#3f7fbf"></div>
<div class="t" style="left:1579px;top:133px;font-size:14px;color:#d4d4d4"><span style="text-decoration:underline">1</span> 5 15 30 60</div>
<div class="t" style="left:1673px;top:133px;font-size:14px;color:#d4d4d4">Тики Сек <span style="text-decoration:underline">Мин</span> Дни</div>
<div class="a" style="left:1244px;top:152px;width:724px;height:779px;background:#555"></div>
<div class="a" style="left:1244px;top:152px;width:3px;height:762px;background:#4a4a4a"></div>
<div class="a" style="left:1247px;top:153px;width:650px;height:723px;background:#000"></div>
<div class="a" style="left:1968px;top:152px;width:3px;height:779px;background:#3d3d3d"></div>
<div class="a" style="left:1244px;top:914px;width:724px;height:17px;background:#3e3e3e"></div>
<svg class="a" style="left:0;top:0" width="2023" height="1142" viewBox="0 0 2023 1142" font-family="Liberation Sans">
<g stroke="#a8a8a8" fill="none" stroke-width="1.2"><path d="M1250 122l5-6 4 3 7-8"/></g><g fill="#a8a8a8"><rect x="1250" y="123" width="1.5" height="2"/><rect x="1253" y="121" width="1.5" height="4"/><rect x="1256" y="120" width="1.5" height="5"/><rect x="1259" y="118" width="1.5" height="7"/><rect x="1262" y="116" width="1.5" height="9"/><rect x="1265" y="113" width="1.5" height="12"/></g>
<path d="M1343 112l8 8M1351 112l-8 8" stroke="#b0b0b0" stroke-width="1.5"/>
<path d="M1143 115l4-4v8z" fill="#6a6a6a"/><path d="M1158.7 111l4 4-4 4z" fill="#6a6a6a"/><path d="M1173 114.6h8l-4 4.4z" fill="#dcdcdc"/><path d="M1188.5 109h10.5l1.5 2.5-1 3.5 1 3 .5 3h-11l-1.5-3 1-3z" fill="#8a8a8a"/><path d="M1192.3 112h3.4v4.5h2.8l-4.5 4.5-4.5-4.5h2.8z" fill="#333"/><path d="M1211.6 110l6.5 5.5-6.5 5.5z" fill="#d8d8d8"/><path d="M1227.3 110h2.8v6.5h2.6l-4 4.5-4-4.5h2.6z" fill="#dcdcdc"/><path d="M1232 110l7 5.5-7 5.5-1.3-1.2 5-4.3-5-4.3z" fill="#dcdcdc"/>
<path d="M1869 115l4-4v8z" fill="#6a6a6a"/><path d="M1884.7 111l4 4-4 4z" fill="#6a6a6a"/><path d="M1899 114.6h8l-4 4.4z" fill="#dcdcdc"/><path d="M1914.5 109h10.5l1.5 2.5-1 3.5 1 3 .5 3h-11l-1.5-3 1-3z" fill="#8a8a8a"/><path d="M1918.3 112h3.4v4.5h2.8l-4.5 4.5-4.5-4.5h2.8z" fill="#333"/><path d="M1937.6 110l6.5 5.5-6.5 5.5z" fill="#d8d8d8"/><path d="M1953.3 110h2.8v6.5h2.6l-4 4.5-4-4.5h2.6z" fill="#dcdcdc"/><path d="M1958 110l7 5.5-7 5.5-1.3-1.2 5-4.3-5-4.3z" fill="#dcdcdc"/>
<path d="M1250 132v15l4-3.5 3 6 2.5-1.2-3-5.8h5.5z" fill="#222"/>
<path d="M1272 139.5h13M1278.5 134v11" stroke="#fff" stroke-width="1.3"/><rect x="1275.8" y="137" width="5.4" height="5" fill="#4e4e4e" stroke="#fff" stroke-width="1.4"/>
<path d="M1295 133l15 14" stroke="#fff" stroke-width="1.8"/><rect x="1293" y="131" width="4" height="4" fill="#fff"/><rect x="1307" y="144" width="4.5" height="4.5" fill="#fff"/>
<path d="M1317 132l16 16" stroke="#fff" stroke-width="1.8"/><rect x="1318" y="134" width="4" height="4" fill="#fff"/><rect x="1324" y="140" width="4" height="4" fill="#fff"/><rect x="1329" y="145" width="3" height="3" fill="#fff"/>
<path d="M1340 133l15 14" stroke="#fff" stroke-width="1.8"/><rect x="1339" y="131" width="4" height="4" fill="#fff"/><path d="M1349 148h7v-7" fill="none" stroke="#fff" stroke-width="1.5"/>
<path d="M1362 139.5h17" stroke="#fff" stroke-width="1.5"/><rect x="1369" y="137.5" width="3.5" height="4" fill="#fff"/>
<path d="M1393.5 131v17" stroke="#fff" stroke-width="1.5"/><rect x="1391.5" y="137.5" width="4" height="4" fill="#fff"/>
<g stroke="#fff" stroke-width="1.5"><path d="M1408 131.5h17M1408 136.5h17M1408 140.5h17M1408 144h17M1408 147.5h17"/><path d="M1409 147l15-15"/></g>
<text x="1439.5" y="148.5" font-family="Liberation Serif" font-size="23.5" fill="#fff" text-anchor="middle">T</text>
<path d="M1454 131v14l3.5-3 3 6 2-1-3-5.5h5z" fill="#fff"/><g fill="#fff"><rect x="1463" y="142" width="8" height="1.3"/><rect x="1464" y="144" width="1.3" height="5"/><rect x="1466.5" y="144" width="1.3" height="5"/><rect x="1469" y="144" width="1.3" height="5"/><rect x="1463.5" y="148.5" width="7" height="1"/></g>
<path d="M1530 135.5h11l-5.5 5z" fill="#d8d8d8"/>
<path d="M1247 205.5H1897" stroke="#2e2e2e" stroke-width="1"/>
<path d="M1247 259.5H1897" stroke="#2e2e2e" stroke-width="1"/>
<path d="M1247 312.5H1897" stroke="#2e2e2e" stroke-width="1"/>
<path d="M1247 397.5H1897" stroke="#2e2e2e" stroke-width="1"/>
<path d="M1247 467.5H1897" stroke="#2e2e2e" stroke-width="1"/>
<path d="M1247 537.5H1897" stroke="#2e2e2e" stroke-width="1"/>
<path d="M1247 607.5H1897" stroke="#2e2e2e" stroke-width="1"/>
<path d="M1247 677.5H1897" stroke="#2e2e2e" stroke-width="1"/>
<path d="M1247 747.5H1897" stroke="#2e2e2e" stroke-width="1"/>
<path d="M1247 818H1897" stroke="#2e2e2e" stroke-width="1"/>
<path d="M1247 367.5H1968" stroke="#fff" stroke-width="1.4"/>
<polyline points="1488.5,356.3 1660.3,162.3 1842,162.3" fill="none" stroke="#00e060" stroke-width="1"/>
<polyline points="1489,862 1660.3,378.5 1707,378.5 1707,379.5 1805,379.5 1805,380.5 1842,380.5" fill="none" stroke="#ff0000" stroke-width="1"/>
<rect x="1257" y="161" width="28" height="28" fill="#2a2a2a"/><rect x="1257" y="632" width="28" height="28" fill="#2a2a2a"/>
<rect x="1263" y="168.5" width="2.5" height="2.5" fill="#fff"/><rect x="1267" y="168.5" width="12" height="2.5" fill="#fff"/>
<rect x="1263" y="172.5" width="2.5" height="2.5" fill="#fff"/><rect x="1267" y="172.5" width="12" height="2.5" fill="#fff"/>
<rect x="1263" y="176.5" width="2.5" height="2.5" fill="#fff"/><rect x="1267" y="176.5" width="12" height="2.5" fill="#fff"/>
<rect x="1263" y="180.5" width="2.5" height="2.5" fill="#fff"/><rect x="1267" y="180.5" width="12" height="2.5" fill="#fff"/>
<rect x="1263" y="639" width="2.5" height="2.5" fill="#fff"/><rect x="1267" y="639" width="12" height="2.5" fill="#fff"/>
<rect x="1263" y="643" width="2.5" height="2.5" fill="#fff"/><rect x="1267" y="643" width="12" height="2.5" fill="#fff"/>
<rect x="1263" y="647" width="2.5" height="2.5" fill="#fff"/><rect x="1267" y="647" width="12" height="2.5" fill="#fff"/>
<rect x="1263" y="651" width="2.5" height="2.5" fill="#fff"/><rect x="1267" y="651" width="12" height="2.5" fill="#fff"/>
</svg>
<div class="t" style="left:1290px;top:168.3px;font-size:13.3px;color:#fff;text-decoration:underline">Главная</div>
<div class="t" style="left:1290px;top:639.3px;font-size:13.4px;color:#fff;text-decoration:underline">ПанельГрафика</div>
<div class="a" style="left:1899px;top:153px;width:69px;height:19px;background:#00cc55"></div>
<div class="a" style="left:1899px;top:370px;width:69px;height:19px;background:#ff0000"></div>
<div class="t" style="left:1899px;top:155.5px;font-size:13.7px;color:#000">382 987.00</div>
<div class="t" style="left:1899px;top:372.5px;font-size:13.7px;color:#2a0000">362 800.00</div>
<div class="t" style="right:56px;top:200.39999999999998px;font-size:13.7px;color:#f4f4f4">300 000.00</div>
<div class="t" style="right:56px;top:254.3px;font-size:13.7px;color:#f4f4f4">200 000.00</div>
<div class="t" style="right:56px;top:307.7px;font-size:13.7px;color:#f4f4f4">100 000.00</div>
<div class="t" style="right:56px;top:392.7px;font-size:13.7px;color:#f4f4f4">350 000.00</div>
<div class="t" style="right:56px;top:462.7px;font-size:13.7px;color:#f4f4f4">300 000.00</div>
<div class="t" style="right:56px;top:532.7px;font-size:13.7px;color:#f4f4f4">250 000.00</div>
<div class="t" style="right:56px;top:602.7px;font-size:13.7px;color:#f4f4f4">200 000.00</div>
<div class="t" style="right:56px;top:673.7px;font-size:13.7px;color:#f4f4f4">150 000.00</div>
<div class="t" style="right:56px;top:743.7px;font-size:13.7px;color:#f4f4f4">100 000.00</div>
<div class="t" style="right:56px;top:813.7px;font-size:13.7px;color:#f4f4f4">50 000.00</div>
<svg class="a" style="left:1950px;top:915px" width="12" height="14"><path d="M3 3v8l4-4z" fill="#2a2a2a"/></svg>
<svg class="a" style="left:1250px;top:915px" width="12" height="14"><path d="M7 3v8l-4-4z" fill="#2a2a2a"/></svg>
<div class="a" style="left:55px;top:914px;width:919px;height:15px;background:#3c3c3c"></div>
<div class="t" style="left:81px;top:916px;font-size:10px;color:#cfcfcf;letter-spacing:-0.3px">100%</div>
<svg class="a" style="left:0;top:900px" width="1000" height="32"><path d="M111 20h7l-3.5 3z" fill="#555"/><path d="M136 18v7l-3.5-3.5z" fill="#555"/><path d="M963 18v8l4-4z" fill="#2a2a2a"/><path d="M978 4h9l-4.5 4z" fill="#2a2a2a"/><rect x="975.5" y="15.5" width="9" height="8" fill="none" stroke="#555" stroke-width="1.2"/><rect x="979.5" y="21.5" width="8" height="5.5" fill="none" stroke="#555" stroke-width="1.2"/></svg>
<div class="a" style="left:991px;top:897px;width:1px;height:34px;background:#000"></div>
<div class="a" style="left:992px;top:897px;width:248px;height:6px;background:#4a4a4a"></div>
<div class="a" style="left:992px;top:903px;width:249px;height:1px;background:#000"></div><div class="a" style="left:1240px;top:897px;width:1px;height:7px;background:#000"></div>
<div class="a" style="left:992px;top:904px;width:249px;height:25px;background:#343434"></div>
<div class="a" style="left:992px;top:929px;width:252px;height:2px;background:#444"></div>
<div class="a" style="left:992px;top:904px;width:68px;height:24px;background:linear-gradient(#8c8c8c,#6a6a6a);border-right:1px solid #000;border-bottom:1px solid #000"></div>
<div class="a" style="left:1063px;top:904px;width:87px;height:24px;background:linear-gradient(#626262,#4c4c4c);border-right:1px solid #000;border-bottom:1px solid #000"></div>
<div class="t" style="left:997px;top:908px;font-size:13.6px;color:#e6e6e6;text-decoration:underline;letter-spacing:-0.2px">Свойства</div>
<div class="t" style="left:1068px;top:908px;font-size:14px;color:#a8a8a8">Подробный</div>
<div class="a" style="left:53px;top:936px;width:1918px;height:154px;background:#3a3a3a"></div>
<div class="a" style="left:53px;top:936px;width:1918px;height:26px;background:linear-gradient(#727272,#5a5a5a)"></div>
<div class="a" style="left:53px;top:962px;width:1918px;height:2px;background:#262626"></div>
<div class="a" style="left:86px;top:936px;width:2px;height:26px;background:#3a3a3a"></div>
<div class="a" style="left:186px;top:936px;width:2px;height:26px;background:#3a3a3a"></div>
<div class="a" style="left:241px;top:936px;width:2px;height:26px;background:#3a3a3a"></div>
<div class="t" style="left:58px;top:943px;font-size:14px;color:#d8d8d8">Тип</div>
<div class="t" style="left:93px;top:943px;font-size:14px;color:#d8d8d8">Время</div>
<div class="t" style="left:193px;top:943px;font-size:14px;color:#d8d8d8">Номер</div>
<div class="t" style="left:248px;top:943px;font-size:14px;color:#d8d8d8">Сообщение</div>
<div class="a" style="left:53px;top:1066px;width:1918px;height:24px;background:linear-gradient(#717171,#575757)"></div>
<div class="a" style="left:390px;top:1066px;width:1px;height:24px;background:#9a9a9a"></div><div class="a" style="left:392.5px;top:1066px;width:1px;height:24px;background:#9a9a9a"></div><div class="a" style="left:395px;top:1066px;width:1px;height:24px;background:#9a9a9a"></div>
<div class="a" style="left:397px;top:1066px;width:61px;height:24px;border-radius:0 0 6px 6px;background:linear-gradient(#6e6e6e,#5e5e5e 15%,#575757)"></div>
<div class="t" style="left:402px;top:1072px;font-size:13.5px;color:#f0f0f0">Лист1</div>
<svg class="a" style="left:442px;top:1071px" width="16" height="16"><path d="M1 7.5h5M6.5 4v8" stroke="#fff" stroke-width="1.3"/><rect x="7" y="5" width="5.5" height="5" fill="none" stroke="#fff" stroke-width="1.6"/></svg>
<div class="a" style="left:458px;top:1066px;width:25px;height:24px;background:#000"></div>
<svg class="a" style="left:458px;top:1066px" width="25" height="24"><path d="M8 12h9M12.5 7.5v9" stroke="#fff" stroke-width="1.6"/></svg>
<svg class="a" style="left:1730px;top:1066px" width="241" height="24"><g fill="#3a3a3a" stroke="#8a8a8a" stroke-width="1"><rect x="8.5" y="7.5" width="10" height="10"/><rect x="70.5" y="7.5" width="10" height="10"/><rect x="134.5" y="7.5" width="10" height="10"/></g><g fill="none" stroke="#f0f0f0" stroke-width="1.8"><path d="M10.5 12.5l2.3 2.3 4-4.5"/><path d="M72.5 12.5l2.3 2.3 4-4.5"/><path d="M136.5 12.5l2.3 2.3 4-4.5"/></g><circle cx="31.5" cy="12.5" r="8.5" fill="#6a9cf5"/><rect x="30" y="10.5" width="3" height="7" rx="1.5" fill="#fff"/><circle cx="31.5" cy="7.5" r="1.6" fill="#fff"/><path d="M94 4l9.5 16h-19z" fill="#ffee00" stroke="#111" stroke-width="1.3" stroke-linejoin="round"/><rect x="92.8" y="8.5" width="2.4" height="6.5" fill="#000"/><rect x="92.8" y="16" width="2.4" height="2.3" fill="#000"/><circle cx="157.5" cy="12.5" r="8.5" fill="#ee0000"/><path d="M154 9l7 7M161 9l-7 7" stroke="#fff" stroke-width="2.6"/></svg>
<div class="t" style="left:1775px;top:1071px;font-size:14px;color:#b8c0d0">0</div>
<div class="t" style="left:1839px;top:1071px;font-size:14px;color:#b8c0d0">0</div>
<div class="t" style="left:1902px;top:1071px;font-size:14px;color:#b8c0d0">0</div>
<div class="a" style="left:1927px;top:1066px;width:1px;height:24px;background:#111"></div>
<div class="a" style="left:1928px;top:1066px;width:21px;height:24px;background:#3c3c3c"></div>
<div class="a" style="left:1949px;top:1066px;width:1px;height:24px;background:#111"></div>
<svg class="a" style="left:1928px;top:1066px" width="21" height="24"><path d="M5 6.5l5.5 5 5.5-5M5 12l5.5 5 5.5-5" fill="none" stroke="#e0e0e0" stroke-width="1.8"/></svg>
<svg class="a" style="left:0;top:0" width="2023" height="1142" viewBox="0 0 2023 1142">
<path d="M959.5 613.6L586.0 282.3" stroke="#00d000" stroke-width="3.2" stroke-linecap="round"/><path d="M591.2 294.2L586.0 282.3L598.5 286.0" fill="none" stroke="#00d000" stroke-width="3.2" stroke-linecap="round" stroke-linejoin="round"/>
<path d="M959.5 613.6L586.5 547.3" stroke="#00d000" stroke-width="3.2" stroke-linecap="round"/><path d="M597.1 554.8L586.5 547.3L599.1 544.0" fill="none" stroke="#00d000" stroke-width="3.2" stroke-linecap="round" stroke-linejoin="round"/>
<path d="M1059.1 638.7L1894.8 173.7" stroke="#00d000" stroke-width="3.2" stroke-linecap="round"/><path d="M1881.8 174.6L1894.8 173.7L1887.2 184.2" fill="none" stroke="#00d000" stroke-width="3.2" stroke-linecap="round" stroke-linejoin="round"/>
<path d="M1194.8 636.5L1892.5 387.4" stroke="#dc0020" stroke-width="3.2" stroke-linecap="round"/><path d="M1879.6 386.2L1892.5 387.4L1883.3 396.5" fill="none" stroke="#dc0020" stroke-width="3.2" stroke-linecap="round" stroke-linejoin="round"/>
<path d="M1328.0 634.0L1328.0 370.5" stroke="#dc0020" stroke-width="3.2" stroke-linecap="round"/><path d="M1322.5 382.3L1328.0 370.5L1333.5 382.3" fill="none" stroke="#dc0020" stroke-width="3.2" stroke-linecap="round" stroke-linejoin="round"/><path d="M1333.5 622.2L1328.0 634.0L1322.5 622.2" fill="none" stroke="#dc0020" stroke-width="3.2" stroke-linecap="round" stroke-linejoin="round"/>
</svg>
</body></html>
